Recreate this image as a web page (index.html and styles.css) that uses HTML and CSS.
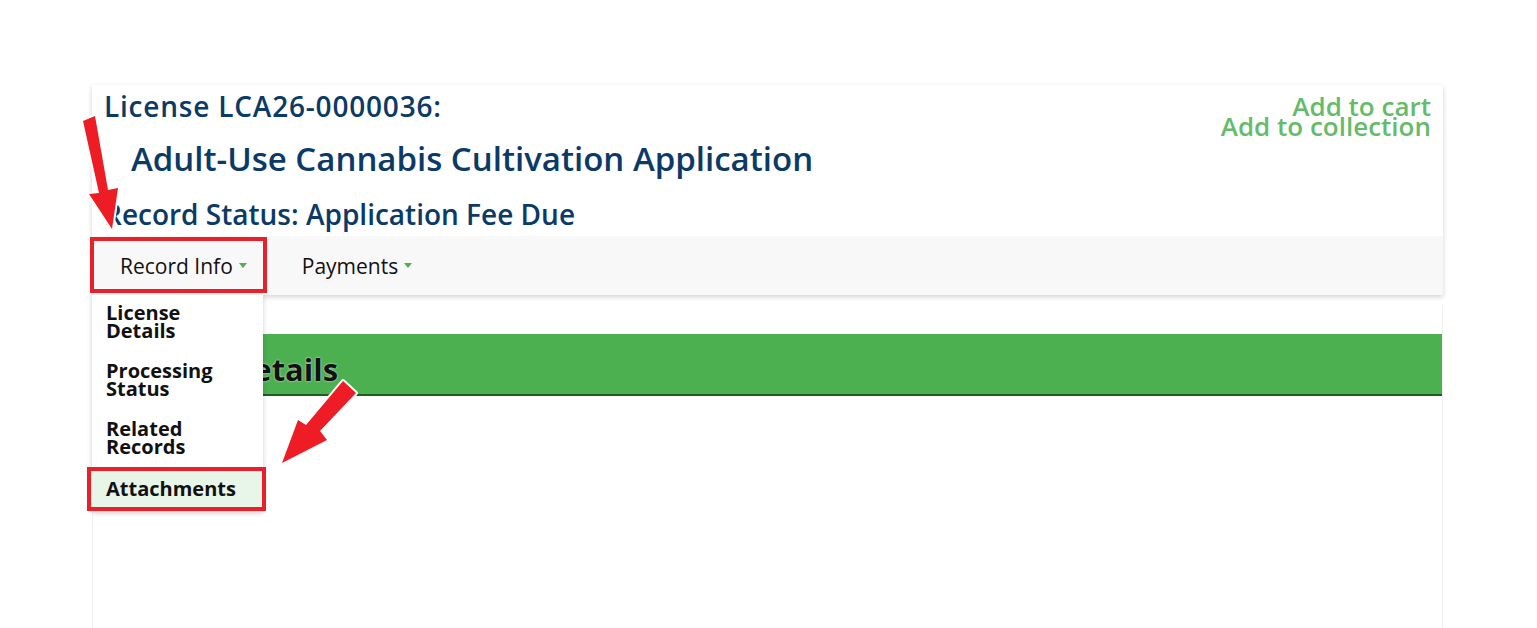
FILE: index.html
```html
<!DOCTYPE html>
<html lang="en">
<head>
  <meta charset="UTF-8">
  <meta name="viewport" content="width=device-width, initial-scale=1.0">
  <title>Record LCA26-0000036</title>
  <link rel="stylesheet" href="styles.css">
</head>
<body>
  <div class="page">
    <div class="record-card">
      <div class="record-header">
        <div class="header-text">
          <h2 class="record-id">License LCA26-0000036:</h2>
          <h1 class="record-type">Adult-Use Cannabis Cultivation Application</h1>
          <h3 class="record-status">Record Status: Application Fee Due</h3>
        </div>
        <div class="header-links">
          <a href="#">Add to cart</a>
          <a href="#">Add to collection</a>
        </div>
      </div>
      <nav class="record-tabs">
        <div class="tab tab-open">
          <span>Record Info</span><span class="caret"></span>
          <ul class="dropdown">
            <li>License Details</li>
            <li>Processing Status</li>
            <li>Related Records</li>
            <li class="active">Attachments</li>
          </ul>
        </div>
        <div class="tab">
          <span>Payments</span><span class="caret"></span>
        </div>
      </nav>
    </div>

    <div class="record-body">
      <div class="section-bar">License Details</div>
    </div>
  </div>

  <!-- red callouts drawn over the page -->
  <div class="callout callout-tab"></div>
  <div class="callout callout-item"></div>
  <svg class="arrows" width="1537" height="628" viewBox="0 0 1537 628">
    <g stroke="#fff" stroke-width="4" stroke-linejoin="round" fill="#ee1c25">
      <polygon points="83,121 95,116 108,190 118,188 112,229 89,194 99,193" />
      <polygon points="343,381 356,393 320,431 327,440 282,463 298,420 306,425" />
    </g>
    <g fill="#ee1c25">
      <polygon points="83,121 95,116 108,190 118,188 112,229 89,194 99,193" />
      <polygon points="343,381 356,393 320,431 327,440 282,463 298,420 306,425" />
    </g>
  </svg>
</body>
</html>
```

FILE: styles.css
```css
body {
  margin: 0;
  font-family: "Open Sans", Lato, sans-serif;
  background: #fff;
}
.page {
  padding: 85px 94px 0 92px;
}
.record-card {
  box-shadow: 0 2px 5px rgba(0, 0, 0, 0.18);
  position: relative;
  z-index: 2;
}
.record-header {
  display: flex;
  justify-content: space-between;
  padding: 4px 12px 5px 12px;
  background: #fff;
}
.record-id, .record-type, .record-status {
  margin: 0;
  color: #0b3a67;
  font-weight: 600;
}
.record-id {
  font-size: 28px;
  line-height: 34px;
  letter-spacing: 0.8px;
}
.record-type {
  font-size: 33px;
  line-height: 40px;
  margin: 16px 0 0 27px;
}
.record-status {
  font-size: 28px;
  line-height: 34px;
  margin-top: 18px;
}
.header-links {
  display: flex;
  flex-direction: column;
  align-items: flex-end;
  padding-top: 7px;
}
.header-links a {
  color: #66bb6a;
  text-decoration: none;
  font-size: 26px;
  font-weight: 600;
  line-height: 20px;
}
.record-tabs {
  display: flex;
  background: #f8f8f8;
  height: 59px;
}
.tab {
  position: relative;
  display: flex;
  align-items: center;
  padding: 0 0 0 28px;
  margin-right: 27px;
  font-size: 21px;
  color: #111;
}
.caret {
  width: 0;
  height: 0;
  margin-left: 6px;
  border-left: 4px solid transparent;
  border-right: 4px solid transparent;
  border-top: 5px solid #4caf50;
}
.dropdown {
  position: absolute;
  top: 59px;
  left: 0;
  width: 171px;
  margin: 0;
  padding: 0;
  list-style: none;
  background: #fff;
  box-shadow: 0 2px 5px rgba(0, 0, 0, 0.2);
}
.dropdown li {
  padding: 9px 40px 13px 14px;
  font-size: 20px;
  font-weight: 700;
  line-height: 18px;
  color: #111;
}
.dropdown li.active {
  background: #e8f5e9;
  padding: 11px 10px 13px 14px;
}
.record-body {
  margin-top: 10px;
  height: 323px;
  border-left: 1px solid #f0f0f0;
  border-right: 1px solid #f0f0f0;
  padding-top: 29px;
}
.section-bar {
  height: 60px;
  background: #4caf50;
  border-bottom: 2px solid #1b5e20;
  font-size: 31px;
  font-weight: 700;
  line-height: 70px;
  padding-left: 14px;
  color: #111;
  text-shadow: 0 0 2px #fff;
}
.callout {
  position: absolute;
  border: 4px solid #e8202a;
  z-index: 5;
}
.callout-tab {
  left: 90px;
  top: 237px;
  width: 169px;
  height: 48px;
}
.callout-item {
  left: 87px;
  top: 467px;
  width: 171px;
  height: 36px;
}
.arrows {
  position: absolute;
  left: 0;
  top: 0;
  z-index: 6;
  pointer-events: none;
}
```
